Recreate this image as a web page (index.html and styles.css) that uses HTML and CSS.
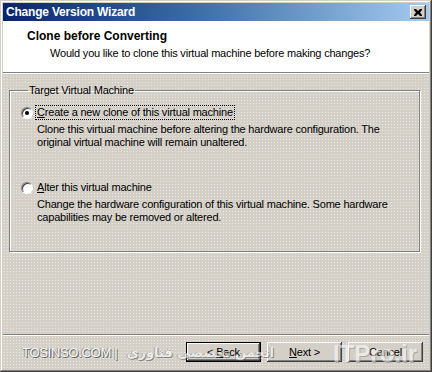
FILE: index.html
```html
<!DOCTYPE html>
<html lang="en">
<head>
    <meta charset="UTF-8">
    <meta name="viewport" content="width=device-width, initial-scale=1.0">
    <title>Change Version Wizard</title>
    <link rel="stylesheet" href="styles.css">
</head>
<body>
    <div class="window">
        <div class="titlebar">
            <span class="title">Change Version Wizard</span>
            <span class="close-btn">
                <svg width="8" height="7" viewBox="0 0 8 7">
                    <path d="M0 0h2l2 2 2-2h2v1L6 3.5 8 6v1H6L4 5 2 7H0V6l2-2.5L0 1z" fill="#000"/>
                </svg>
            </span>
        </div>

        <div class="header">
            <div class="header-title">Clone before Converting</div>
            <div class="header-sub">Would you like to clone this virtual machine before making changes?</div>
        </div>
        <div class="etched"></div>

        <div class="content">
            <fieldset class="group">
                <legend>Target Virtual Machine</legend>

                <div class="option">
                    <span class="radio checked"></span>
                    <span class="option-label focus"><u>C</u>reate a new clone of this virtual machine</span>
                </div>
                <div class="option-desc">Clone this virtual machine before altering the hardware configuration. The original virtual machine will remain unaltered.</div>

                <div class="option second">
                    <span class="radio"></span>
                    <span class="option-label"><u>A</u>lter this virtual machine</span>
                </div>
                <div class="option-desc">Change the hardware configuration of this virtual machine. Some hardware capabilities may be removed or altered.</div>
            </fieldset>
        </div>

        <div class="etched"></div>

        <div class="footer">
            <button class="btn default">&lt; <u>B</u>ack</button>
            <button class="btn"><u>N</u>ext &gt;</button>
            <button class="btn">Cancel</button>
        </div>

        <div class="watermark-left">TOSINSO.COM | <span class="fa">انجمن تخصصی فناوری</span></div>
        <div class="watermark-right">ITPro.ir</div>
    </div>
</body>
</html>
```

FILE: styles.css
```css
body {
    margin: 0;
    background: #d4d0c8;
    font-family: "Liberation Sans", Arial, sans-serif;
    font-size: 11px;
    color: #000;
}

.window {
    position: relative;
    width: 432px;
    height: 372px;
    box-sizing: border-box;
    padding: 3px;
    display: flex;
    flex-direction: column;
    background-color: #d4d0c8;
    background-image: radial-gradient(circle, #e9e7e2 0.7px, transparent 0.9px);
    background-size: 3px 3px;
    box-shadow: inset -1px -1px 0 #404040, inset 1px 1px 0 #d4d0c8,
                inset -2px -2px 0 #808080, inset 2px 2px 0 #fff;
    overflow: hidden;
}

.titlebar {
    height: 18px;
    flex: none;
    display: flex;
    align-items: center;
    justify-content: space-between;
    padding: 0 3px 0 3px;
    background: linear-gradient(to right, #0a246a 0%, #3a6ea5 45%, #a6caf0 100%);
}

.title {
    color: #fff;
    font-weight: bold;
    font-size: 12px;
    letter-spacing: -0.2px;
}

.close-btn {
    width: 16px;
    height: 14px;
    box-sizing: border-box;
    display: flex;
    align-items: center;
    justify-content: center;
    background: #d4d0c8;
    box-shadow: inset -1px -1px 0 #404040, inset 1px 1px 0 #fff,
                inset -2px -2px 0 #808080;
}

.header {
    height: 51px;
    flex: none;
    background: #fff;
    box-sizing: border-box;
    padding: 8px 0 0 24px;
}

.header-title {
    font-weight: bold;
    font-size: 12px;
    line-height: 15px;
}

.header-sub {
    padding-left: 23px;
    margin-top: 3px;
    line-height: 13px;
    letter-spacing: -0.2px;
}

.etched {
    flex: none;
    height: 0;
    border-top: 1px solid #808080;
    border-bottom: 1px solid #fff;
}

.content {
    flex: 1;
    padding: 10px 9px 0 6px;
}

.group {
    margin: 0;
    height: 168px;
    box-sizing: border-box;
    padding: 8px 12px 0 11px;
    border: 1px solid #808080;
    box-shadow: inset 1px 1px 0 #fff, 1px 1px 0 #fff;
}

legend {
    padding: 0 1px;
    margin-left: 7px;
    line-height: 13px;
    letter-spacing: -0.2px;
}

.option {
    display: flex;
    align-items: center;
    gap: 2px;
}

.option.second {
    margin-top: 31px;
}

.radio {
    width: 12px;
    height: 12px;
    box-sizing: border-box;
    border-radius: 50%;
    background: #fff;
    border: 1px solid;
    border-color: #808080 #fff #fff #808080;
    box-shadow: inset 1px 1px 0 #404040;
    position: relative;
}

.radio.checked::after {
    content: "";
    position: absolute;
    left: 3px;
    top: 3px;
    width: 4px;
    height: 4px;
    border-radius: 50%;
    background: #000;
}

.option-label {
    padding: 0 1px;
    line-height: 13px;
    letter-spacing: -0.2px;
    border: 1px dotted transparent;
}

.option-label.focus {
    border-color: #000;
}

.option-desc {
    padding-left: 16px;
    margin-top: 3px;
    line-height: 13px;
    letter-spacing: -0.2px;
    max-width: 360px;
}

.footer {
    flex: none;
    height: 33px;
    box-sizing: border-box;
    display: flex;
    justify-content: flex-end;
    gap: 6px;
    padding: 6px 6px 0 0;
}

.btn {
    width: 75px;
    height: 20px;
    padding: 0;
    font-family: inherit;
    font-size: 11px;
    letter-spacing: -0.2px;
    background: #d4d0c8;
    border: none;
    box-shadow: inset -1px -1px 0 #404040, inset 1px 1px 0 #fff,
                inset -2px -2px 0 #808080;
}

.btn.default {
    border: 1px solid #000;
}

.watermark-left {
    position: absolute;
    left: 22px;
    top: 345px;
    color: #fff;
    font-size: 13px;
    letter-spacing: -0.3px;
    text-shadow: 1px 1px 0 #555, -1px 0 0 #888;
    opacity: 0.85;
}

.watermark-left .fa {
    margin-left: 6px;
    font-family: "DejaVu Sans", sans-serif;
    font-weight: bold;
    opacity: 0.7;
}

.watermark-right {
    position: absolute;
    left: 333px;
    top: 340px;
    color: #fff;
    font-weight: bold;
    font-size: 24px;
    text-shadow: 1px 1px 0 #888;
    opacity: 0.55;
}
```
